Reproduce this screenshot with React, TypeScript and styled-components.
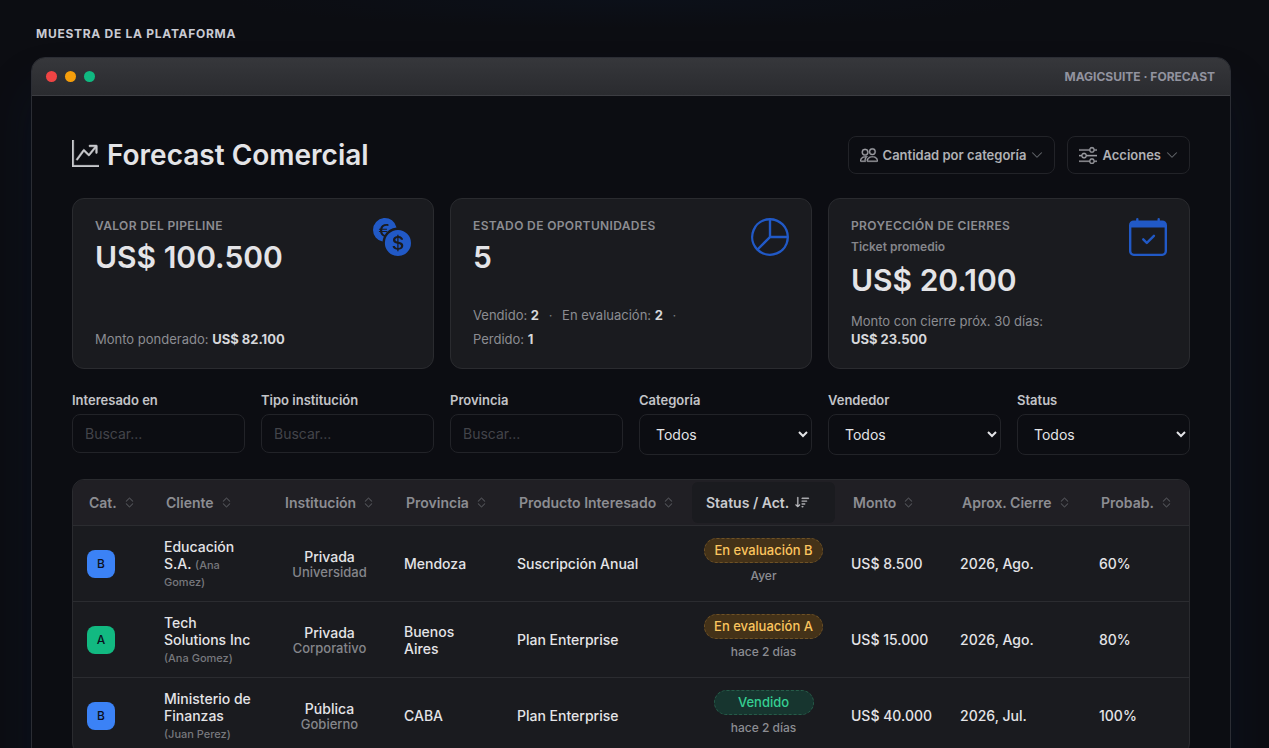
import React from "react";
import styled, { createGlobalStyle, css } from "styled-components";
import {
  BsCalendarCheck,
  BsChevronDown,
  BsChevronExpand,
  BsCurrencyExchange,
  BsGraphUpArrow,
  BsPeople,
  BsPieChart,
  BsSliders,
  BsSortDown,
} from "react-icons/bs";

const GlobalStyle = createGlobalStyle`
  *, *::before, *::after { box-sizing: border-box; }
  body {
    margin: 0;
    background: #0c0d12;
    color: #e4e4e7;
    font-family: Inter, "Liberation Sans", sans-serif;
    font-size: 14px;
    line-height: 17px;
  }
  button, input, select { font-family: inherit; }
`;

const Page = styled.main`
  height: 100vh;
  overflow: hidden;
  padding: 24px 38px 0 31px;
  background: radial-gradient(ellipse 400px 28px at 50% 0, #0c1019, #0c0d12);
`;

const Eyebrow = styled.h2`
  margin: 0 0 13px 5px;
  color: #c9cad2;
  font-size: 12px;
  font-weight: 700;
  line-height: 20px;
  letter-spacing: 0.06em;
  text-transform: uppercase;
`;

const Window = styled.section`
  border: 1px solid #2b2d34;
  border-radius: 14px;
  background: #0c0d12;
  box-shadow: 0 32px 48px rgba(8, 32, 72, 0.22);
  overflow: hidden;
`;

const TitleBar = styled.header`
  display: flex;
  align-items: center;
  justify-content: space-between;
  height: 38px;
  padding: 0 15px 0 14px;
  border-bottom: 1px solid #3c3d42;
  background: linear-gradient(#36373b, #2a2b2f);
`;

const Dots = styled.div`
  display: flex;
  gap: 8px;
`;

const Dot = styled.span<{ $color: string }>`
  width: 11px;
  height: 11px;
  border-radius: 50%;
  background: ${(p) => p.$color};
`;

const WindowName = styled.span`
  color: #92939f;
  font-size: 12px;
  font-weight: 700;
`;

const Content = styled.div`
  padding: 40px 40px 60px;
`;

const TopRow = styled.div`
  display: flex;
  align-items: center;
  justify-content: space-between;
  margin-bottom: 24px;
`;

const Title = styled.h1`
  display: flex;
  align-items: center;
  gap: 8px;
  margin: 0;
  font-size: 28px;
  font-weight: 600;
  line-height: 38px;
  svg {
    margin-bottom: 3px;
    color: #c9cace;
    stroke: currentColor;
    stroke-width: 0.3;
  }
`;

const Actions = styled.div`
  display: flex;
  gap: 12px;
`;

const ActionButton = styled.button`
  display: flex;
  align-items: center;
  gap: 5px;
  height: 38px;
  padding: 0 11px;
  border: 1px solid #222328;
  border-radius: 8px;
  background: transparent;
  color: #b0b1b5;
  font-size: 13px;
  font-weight: 600;
  svg {
    color: #9b9ca1;
    stroke: currentColor;
    stroke-width: 0.3;
  }
  svg:last-child { color: #6b6c71; }
`;

const Cards = styled.div`
  display: grid;
  grid-template-columns: repeat(3, 1fr);
  gap: 16px;
  margin-bottom: 22px;
`;

const Card = styled.article`
  display: flex;
  justify-content: space-between;
  min-height: 171px;
  padding: 19px 22px 20px;
  border: 1px solid #2a2b2f;
  border-radius: 12px;
  background: #1a1b1f;
  > svg { flex: none; color: #2159c6; }
`;

const CardBody = styled.div`
  display: flex;
  flex-direction: column;
  max-width: 224px;
`;

const CardLabel = styled.h3`
  margin: 0;
  color: #8c8d92;
  font-size: 12px;
  font-weight: 600;
  line-height: 16px;
  letter-spacing: 0.03em;
  text-transform: uppercase;
  white-space: nowrap;
`;

const CardHint = styled.span`
  margin: 4px 0 2px;
  color: #85868b;
  font-size: 12px;
  font-weight: 600;
`;

const CardValue = styled.strong`
  margin-top: 6px;
  font-size: 30px;
  font-weight: 600;
  line-height: 34px;
`;

const CardFoot = styled.div<{ $loose?: boolean }>`
  margin-top: auto;
  color: #8c8d92;
  font-size: 13px;
  line-height: ${(p) => (p.$loose ? "24px" : "18px")};
  margin-bottom: ${(p) => (p.$loose ? "-3px" : "0")};
  strong {
    color: #d6d7da;
    font-weight: 700;
    white-space: nowrap;
  }
`;

const Separator = styled.span`
  margin: 0 6px;
  color: #77787d;
`;

const Filters = styled.form`
  display: grid;
  grid-template-columns: repeat(6, 1fr);
  gap: 16px;
  align-items: start;
  margin-bottom: 24px;
`;

const Field = styled.label`
  display: flex;
  flex-direction: column;
  gap: 5px;
  color: #c3c4c8;
  font-size: 13px;
  font-weight: 600;
  line-height: 18px;
`;

const control = css`
  width: 100%;
  border: 1px solid #222328;
  border-radius: 8px;
  background: #0c0d12;
  color: #e4e4e7;
`;

const TextInput = styled.input`
  ${control}
  height: 39px;
  padding: 0 12px;
  font-size: 14px;
  &::placeholder { color: #43444a; }
`;

const Select = styled.select`
  ${control}
  height: 41px;
  padding: 0 0 0 12px;
  font-size: 14px;
`;

const TableFrame = styled.div`
  border: 1px solid #2a2b2f;
  border-radius: 12px;
  background: #1a1b1f;
  overflow: hidden;
`;

const Table = styled.table`
  width: 100%;
  table-layout: fixed;
  border-collapse: collapse;
`;

const Th = styled.th`
  padding: 2px;
  border-bottom: 1px solid #2b2c30;
  background: #201f24;
`;

const SortButton = styled.button<{ $active?: boolean }>`
  display: flex;
  align-items: center;
  gap: 6px;
  width: 100%;
  height: 41px;
  padding: 0 14px;
  border: 0;
  border-radius: 6px;
  background: ${(p) => (p.$active ? "#1a1b1f" : "transparent")};
  color: ${(p) => (p.$active ? "#c9cace" : "#8c8d92")};
  font-size: 14px;
  font-weight: 600;
  white-space: nowrap;
  svg {
    flex: none;
    color: ${(p) => (p.$active ? "#c9cace" : "#55565b")};
    stroke: currentColor;
    stroke-width: 0.3;
  }
`;

const Td = styled.td<{ $center?: boolean }>`
  height: 76px;
  padding: 0 14px;
  border-bottom: 1px solid #2b2c30;
  font-weight: 500;
  text-align: ${(p) => (p.$center ? "center" : "left")};
  vertical-align: middle;
`;

const StatusTd = styled(Td)`
  padding: 0 0 6px;
`;

const Category = styled.span<{ $top?: boolean }>`
  display: flex;
  align-items: center;
  justify-content: center;
  width: 28px;
  height: 28px;
  border-radius: 8px;
  background: ${(p) => (p.$top ? "#12b981" : "#3b82f6")};
  color: #0b1020;
  font-size: 12px;
`;

const Seller = styled.small`
  color: #77787d;
  font-size: 11px;
  line-height: 13px;
`;

const Kind = styled.div`
  color: #85868b;
  font-size: 13px;
  line-height: 15px;
`;

const Pill = styled.div<{ $won?: boolean }>`
  width: fit-content;
  min-width: 100px;
  height: 25px;
  margin: 0 auto;
  padding: 0 9px;
  border: 1px dashed ${(p) => (p.$won ? "#265c49" : "#6f5226")};
  border-radius: 13px;
  background: ${(p) => (p.$won ? "#17352f" : "#443218")};
  color: ${(p) => (p.$won ? "#35cf92" : "#fbc55f")};
  font-size: 13px;
  line-height: 23px;
`;

const Activity = styled.div`
  margin-top: 4px;
  color: #8c8d92;
  font-size: 12px;
  line-height: 17px;
`;

const columns = [
  { name: "Cat.", width: 77 },
  { name: "Cliente", width: 119 },
  { name: "Institución", width: 121 },
  { name: "Provincia", width: 113 },
  { name: "Producto Interesado", width: 187 },
  { name: "Status / Act.", width: 147, active: true },
  { name: "Monto", width: 109 },
  { name: "Aprox. Cierre", width: 139 },
  { name: "Probab.", width: 104 },
];

const rows = [
  { cat: "B", client: "Educación S.A.", seller: "Ana Gomez", type: "Privada", kind: "Universidad", place: "Mendoza", product: "Suscripción Anual", status: "En evaluación B", when: "Ayer", amount: "US$ 8.500", close: "2026, Ago.", odds: "60%" },
  { cat: "A", client: "Tech Solutions Inc", seller: "Ana Gomez", type: "Privada", kind: "Corporativo", place: "Buenos Aires", product: "Plan Enterprise", status: "En evaluación A", when: "hace 2 días", amount: "US$ 15.000", close: "2026, Ago.", odds: "80%" },
  { cat: "B", client: "Ministerio de Finanzas", seller: "Juan Perez", type: "Pública", kind: "Gobierno", place: "CABA", product: "Plan Enterprise", status: "Vendido", when: "hace 2 días", amount: "US$ 40.000", close: "2026, Jul.", odds: "100%" },
];

export default function App() {
  return (
    <Page>
      <GlobalStyle />
      <Eyebrow>Muestra de la plataforma</Eyebrow>
      <Window>
        <TitleBar>
          <Dots>
            <Dot $color="#ef4444" />
            <Dot $color="#f59e0b" />
            <Dot $color="#10b981" />
          </Dots>
          <WindowName>MAGICSUITE · FORECAST</WindowName>
        </TitleBar>
        <Content>
          <TopRow>
            <Title>
              <BsGraphUpArrow size={27} />
              Forecast Comercial
            </Title>
            <Actions>
              <ActionButton type="button">
                <BsPeople size={18} />
                Cantidad por categoría
                <BsChevronDown size={12} />
              </ActionButton>
              <ActionButton type="button">
                <BsSliders size={18} />
                Acciones
                <BsChevronDown size={12} />
              </ActionButton>
            </Actions>
          </TopRow>

          <Cards>
            <Card>
              <CardBody>
                <CardLabel>Valor del pipeline</CardLabel>
                <CardValue>US$ 100.500</CardValue>
                <CardFoot>
                  Monto ponderado: <strong>US$ 82.100</strong>
                </CardFoot>
              </CardBody>
              <BsCurrencyExchange size={38} />
            </Card>
            <Card>
              <CardBody>
                <CardLabel>Estado de oportunidades</CardLabel>
                <CardValue>5</CardValue>
                <CardFoot $loose>
                  Vendido: <strong>2</strong> <Separator>·</Separator> En evaluación: <strong>2</strong>{" "}
                  <Separator>·</Separator> <br />
                  Perdido: <strong>1</strong>
                </CardFoot>
              </CardBody>
              <BsPieChart size={38} />
            </Card>
            <Card>
              <CardBody>
                <CardLabel>Proyección de cierres</CardLabel>
                <CardHint>Ticket promedio</CardHint>
                <CardValue>US$ 20.100</CardValue>
                <CardFoot>
                  Monto con cierre próx. 30 días: <strong>US$ 23.500</strong>
                </CardFoot>
              </CardBody>
              <BsCalendarCheck size={38} />
            </Card>
          </Cards>

          <Filters>
            {["Interesado en", "Tipo institución", "Provincia"].map((name) => (
              <Field key={name}>
                {name}
                <TextInput type="text" placeholder="Buscar..." />
              </Field>
            ))}
            {["Categoría", "Vendedor", "Status"].map((name) => (
              <Field key={name}>
                {name}
                <Select>
                  <option>Todos</option>
                </Select>
              </Field>
            ))}
          </Filters>

          <TableFrame>
            <Table>
              <colgroup>
                {columns.map((c) => (
                  <col key={c.name} width={c.width} />
                ))}
              </colgroup>
              <thead>
                <tr>
                  {columns.map((c) => (
                    <Th key={c.name} scope="col">
                      <SortButton type="button" $active={c.active}>
                        {c.name}
                        {c.active ? <BsSortDown size={15} /> : <BsChevronExpand size={13} />}
                      </SortButton>
                    </Th>
                  ))}
                </tr>
              </thead>
              <tbody>
                {rows.map((r) => (
                  <tr key={r.client}>
                    <Td>
                      <Category $top={r.cat === "A"}>{r.cat}</Category>
                    </Td>
                    <Td>
                      {r.client} <Seller>({r.seller})</Seller>
                    </Td>
                    <Td $center>
                      {r.type}
                      <Kind>{r.kind}</Kind>
                    </Td>
                    <Td>{r.place}</Td>
                    <Td>{r.product}</Td>
                    <StatusTd $center>
                      <Pill $won={r.status === "Vendido"}>{r.status}</Pill>
                      <Activity>{r.when}</Activity>
                    </StatusTd>
                    <Td>{r.amount}</Td>
                    <Td>{r.close}</Td>
                    <Td>{r.odds}</Td>
                  </tr>
                ))}
              </tbody>
            </Table>
          </TableFrame>
        </Content>
      </Window>
    </Page>
  );
}
